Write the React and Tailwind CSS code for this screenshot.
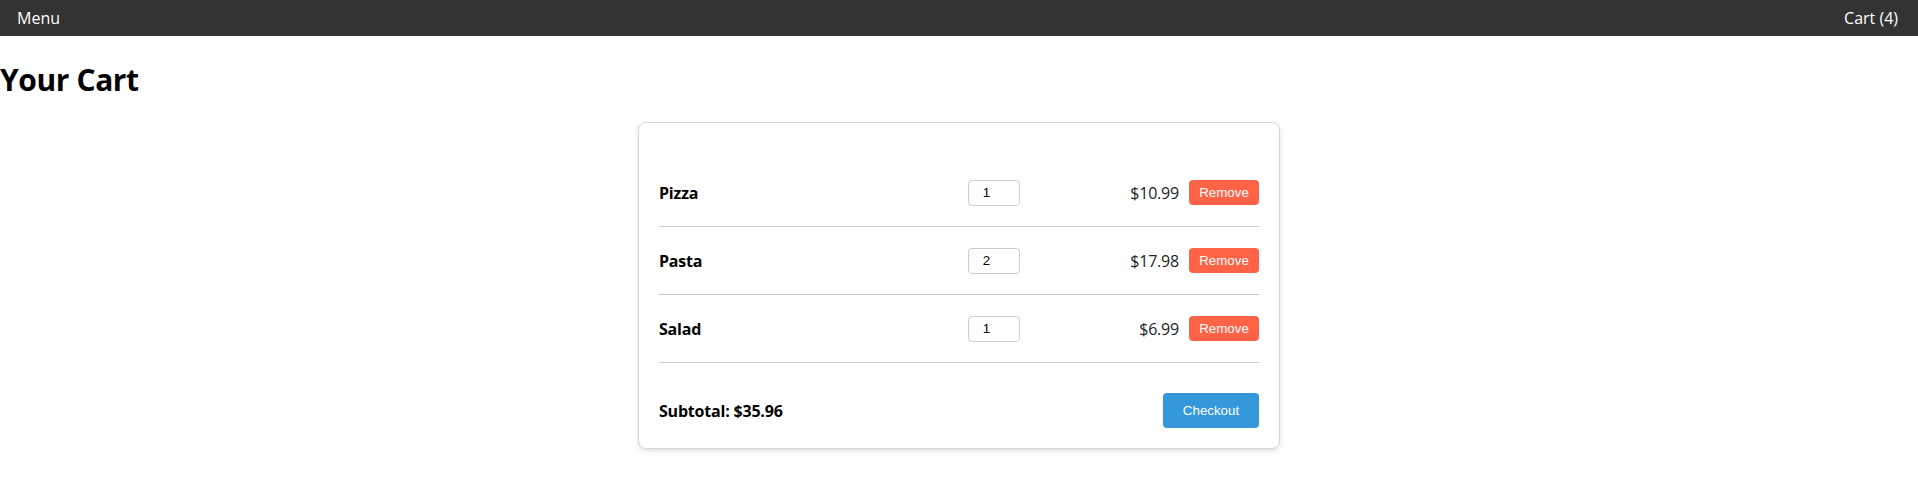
import React from "react";

const items = [
  { name: "Pizza", qty: 1, price: "$10.99" },
  { name: "Pasta", qty: 2, price: "$17.98" },
  { name: "Salad", qty: 1, price: "$6.99" },
];

export default function App() {
  return (
    <div className="min-h-[480px] bg-white text-black" style={{ fontFamily: '"Open Sans", "Noto Sans", sans-serif' }}>
      <nav className="flex h-9 items-center justify-between bg-[#333333] pl-[17px] pr-5 text-base text-white">
        <span>Menu</span>
        <span>Cart (4)</span>
      </nav>
      <h1 className="mt-[22px] mb-[21px] text-[30px] font-bold leading-[43px] tracking-[-0.4px]">Your Cart</h1>
      <div className="mx-auto w-[642px] rounded-lg border border-[#d6d6d6] bg-white p-5 shadow-[0_2px_5px_rgba(0,0,0,0.12)]">
        <ul className="my-4">
          {items.map((it) => (
            <li key={it.name} className="flex h-[68px] items-center border-b border-[#cccccc]">
              <span className="w-[309px] text-base font-bold tracking-[-0.2px]">{it.name}</span>
              <input
                type="number"
                defaultValue={it.qty}
                className="h-[26px] w-[52px] rounded border border-[#cccccc] px-[5px] text-center text-[13.33px] text-black"
                style={{ fontFamily: '"Liberation Sans", Arial, sans-serif' }}
              />
              <span className="ml-auto text-base tracking-[-0.2px] text-[#222]">{it.price}</span>
              <button
                className="ml-[10px] h-[25px] w-[70px] rounded bg-[#ff6347] text-[13.33px] text-white"
                style={{ fontFamily: '"Liberation Sans", Arial, sans-serif' }}
              >
                Remove
              </button>
            </li>
          ))}
        </ul>
        <div className="flex items-center justify-between pt-[14px]">
          <span className="text-base font-bold tracking-[-0.2px]">Subtotal: $35.96</span>
          <button
            className="h-[35px] w-[96px] rounded bg-[#3498db] text-[13.33px] text-white"
            style={{ fontFamily: '"Liberation Sans", Arial, sans-serif' }}
          >
            Checkout
          </button>
        </div>
      </div>
    </div>
  );
}
